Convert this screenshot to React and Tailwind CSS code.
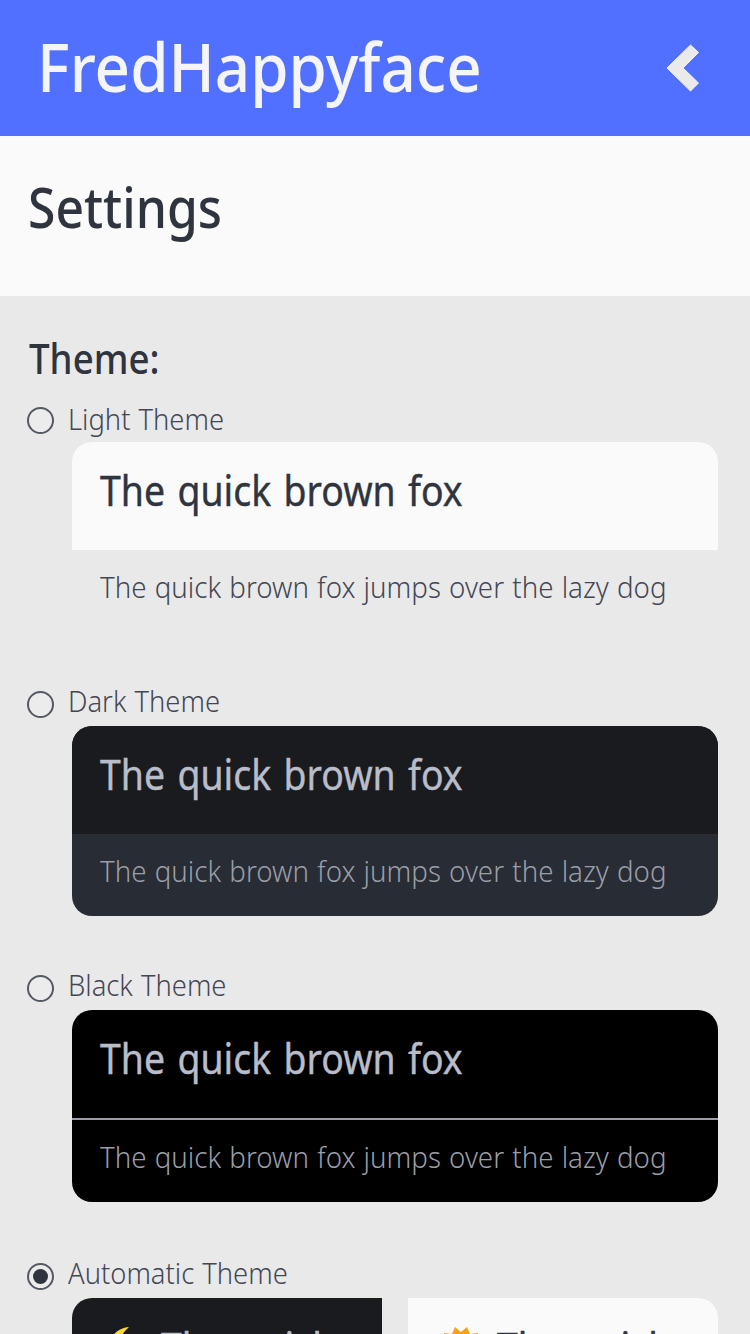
const FOX = 'The quick brown fox';
const DOG = 'The quick brown fox jumps over the lazy dog';

function Radio({ label, checked, first }) {
  return (
    <div className="flex h-11 items-center pl-[27px]">
      <span className="flex size-[27px] shrink-0 items-center justify-center rounded-full border-2 border-[#555963] bg-[#ececec]">
        {checked && <span className="size-[15px] rounded-full bg-[#2f343f]" />}
      </span>
      <span
        className={`ml-[14px] origin-left scale-x-[0.96] text-[28.5px] leading-[30px] font-light [word-spacing:1px] whitespace-nowrap text-[#434754] ${first ? 'pb-[3px]' : 'pb-[6px]'}`}
      >
        {label}
      </span>
    </div>
  );
}

function Heading({ children, className }) {
  return (
    <div className={`flex items-center pb-3 pl-7 text-[41px] leading-[56px] [word-spacing:3px] ${className}`}>
      <span className="origin-left scale-x-[0.912] whitespace-nowrap [-webkit-text-stroke:0.4px_currentColor]">{children}</span>
    </div>
  );
}

function Preview({ head, body, className }) {
  return (
    <div className={`mr-8 ml-[72px] overflow-hidden rounded-[20px] ${className}`}>
      <Heading className={head}>{FOX}</Heading>
      <div className={`flex h-[82px] items-center pb-2 pl-7 text-[28.5px] leading-10 font-light [word-spacing:1px] ${body}`}>
        <span className="origin-left scale-x-[0.972] whitespace-nowrap">{DOG}</span>
      </div>
    </div>
  );
}

function Moon() {
  return (
    <svg className="mt-1 mr-[13px] h-12 w-12 shrink-0" viewBox="0 0 48 48">
      <path d="M29 4C17 5 9 14 10 25C11 37 25 45 38 38C25 37 19 29 20 19C20 13 24 9 29 4Z" fill="#fdd835" />
    </svg>
  );
}

function Sun() {
  return (
    <svg className="mt-1 mr-[13px] h-12 w-12 shrink-0" viewBox="0 0 48 48">
      <path
        d="M19 4L25 9L31 4L34 11L42 10L41 19L47 23L42 29L44 37L36 38L33 45L25 41L17 45L14 38L6 37L8 29L3 23L9 19L8 10L16 11Z"
        fill="#f5a11b"
      />
      <circle cx="25" cy="25" r="12" fill="#fdd835" />
    </svg>
  );
}

export default function App() {
  return (
    <div className="h-[1334px] w-[750px] overflow-hidden bg-[#e9e9e9] font-['Noto_Sans',sans-serif] text-[#2f343f]">
      <header className="flex h-[136px] items-center justify-between bg-[#5170ff] pr-[51px] pl-[37px]">
        <span className="origin-left scale-x-[0.91] pb-[4px] text-[68px] leading-[80px] font-medium text-[#f5f5f5]">FredHappyface</span>
        <svg className="h-12 w-[33px]" viewBox="0 0 33 48">
          <path d="M1 24L24.500 1L32.500 8.500L17 24L32.500 39L24.500 47Z" fill="#eaeaea" stroke="#f4f4f4" strokeWidth="1" />
        </svg>
      </header>
      <section className="h-[160px] bg-[#fafafa] pt-8 pl-7">
        <h1 className="origin-left scale-x-[0.89] text-[56px] leading-[76px] font-medium">Settings</h1>
      </section>
      <main className="pt-8">
        <h2 className="mb-[10px] ml-[29px] origin-left scale-x-[0.895] text-[41px] leading-[60px] font-medium">Theme:</h2>
        <Radio label="Light Theme" first />
        <Preview head="h-[108px] bg-[#fafafa]" body="text-[#434754]" className="mb-[50px]" />
        <Radio label="Dark Theme" />
        <Preview
          head="h-[108px] bg-[#1a1b1f] text-[#b9bdc9]"
          body="text-[#9a9ea7]"
          className="mb-[50px] bg-[#282c34]"
        />
        <Radio label="Black Theme" />
        <Preview
          head="h-[110px] border-b-2 border-[#9a9ea8] text-[#b9bdc9]"
          body="text-[#9a9ea7]"
          className="mb-[52px] bg-black"
        />
        <Radio label="Automatic Theme" checked />
        <div className="mr-8 ml-[72px] grid grid-cols-2 gap-[26px] [word-spacing:3px]">
          <div className="flex overflow-hidden rounded-l-[20px] bg-[#1a1b1f] pt-[21px] pl-7 text-[#b9bdc9]">
            <Moon />
            <span className="origin-left scale-x-[0.912] text-[41px] leading-[56px] whitespace-nowrap [-webkit-text-stroke:0.4px_currentColor]">The quick</span>
          </div>
          <div className="flex overflow-hidden rounded-r-[20px] bg-[#fafafa] pt-[21px] pl-7">
            <Sun />
            <span className="origin-left scale-x-[0.912] text-[41px] leading-[56px] whitespace-nowrap [-webkit-text-stroke:0.4px_currentColor]">The quick</span>
          </div>
        </div>
      </main>
    </div>
  );
}
